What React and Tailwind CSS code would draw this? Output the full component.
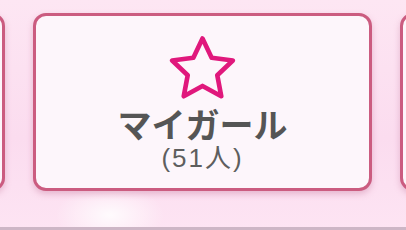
import React from "react";

function Star() {
  const cx = 50, cy = 50, R = 40, r = 19.5;
  const pts = [];
  for (let i = 0; i < 10; i++) {
    const rad = i % 2 === 0 ? R : r;
    const a = (-90 + i * 36) * Math.PI / 180;
    pts.push(`${(cx + rad * Math.cos(a)).toFixed(2)},${(cy + rad * Math.sin(a)).toFixed(2)}`);
  }
  return (
    <svg width="67" height="64" viewBox="8 7 84 80" className="block">
      <polygon points={pts.join(" ")} fill="none" stroke="#e0187c" strokeWidth="5.8" strokeLinejoin="round" />
    </svg>
  );
}

function Card({ children }) {
  return (
    <div className="w-[339px] h-[178px] shrink-0 rounded-[13px] border-[3px] border-[#cb5c80] bg-[#fdf6fb] shadow-[0_3px_6px_rgba(190,100,140,0.35)] flex flex-col items-center">
      {children}
    </div>
  );
}

export default function App() {
  return (
    <div className="w-[406px] h-[230px] overflow-hidden relative bg-[linear-gradient(180deg,#fde6f3_0%,#fbdcef_60%,#fde4f3_100%)] flex flex-col" style={{ fontFamily: '"Noto Sans CJK JP", "Noto Sans", sans-serif' }}>
      <div className="absolute left-[55px] top-[185px] w-[110px] h-[60px] rounded-full bg-[radial-gradient(ellipse_at_center,rgba(255,255,255,0.85),rgba(255,255,255,0)_70%)]"></div>
      <div className="relative flex gap-[28px] ml-[-334px] mt-[13px]">
        <Card />
        <Card>
          <div className="mt-[20px]"><Star /></div>
          <div className="mt-[5px] text-[34px] leading-[38px] font-bold text-[#555]">マイガール</div>
          <div className="mt-[1px] text-[26px] leading-[28px] tracking-[2px] text-[#5e5e5e]" style={{ fontFamily: '"Liberation Sans", "Noto Sans CJK JP", sans-serif' }}>(51人)</div>
        </Card>
        <Card />
      </div>
      <div className="absolute left-0 bottom-0 w-full h-[3px] bg-[#cdb6c6]"></div>
    </div>
  );
}
